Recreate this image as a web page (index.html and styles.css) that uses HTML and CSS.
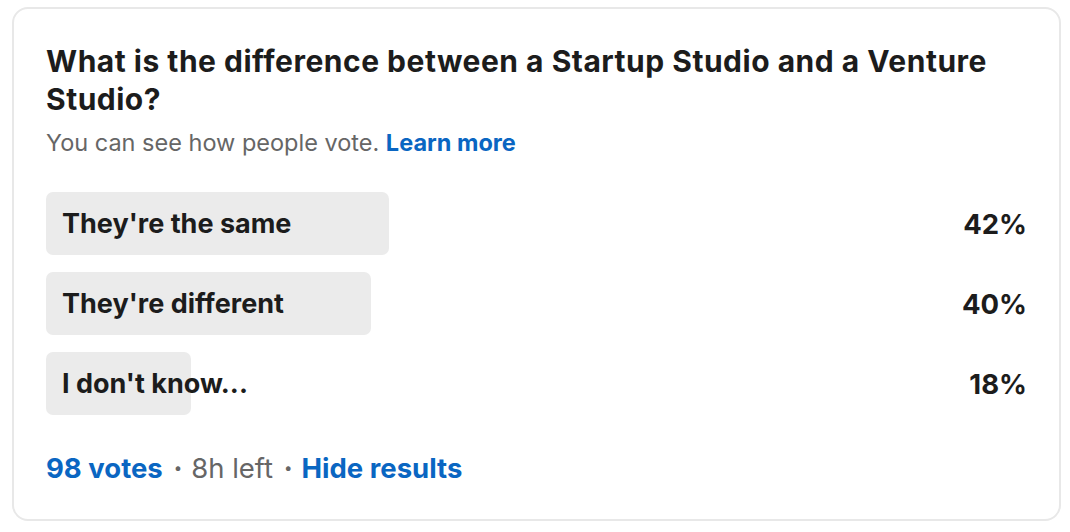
FILE: index.html
```html
<!DOCTYPE html>
<html>
<head>
<meta charset="utf-8">
<link rel="stylesheet" href="styles.css">
</head>
<body>
<div class="card">
  <h1 class="title">What is the difference between a Startup Studio and a Venture Studio?</h1>
  <p class="sub">You can see how people vote. <a class="link" href="#">Learn more</a></p>
  <div class="options">
    <div class="option">
      <div class="bar-wrap"><div class="bar" style="width:343px"></div><span class="label">They're the same</span></div>
      <span class="pct">42%</span>
    </div>
    <div class="option">
      <div class="bar-wrap"><div class="bar" style="width:325px"></div><span class="label">They're different</span></div>
      <span class="pct">40%</span>
    </div>
    <div class="option">
      <div class="bar-wrap"><div class="bar" style="width:145px"></div><span class="label">I don't know...</span></div>
      <span class="pct">18%</span>
    </div>
  </div>
  <div class="footer">
    <a class="link" href="#">98 votes</a><span class="dot">•</span><span class="meta">8h left</span><span class="dot">•</span><a class="link" href="#">Hide results</a>
  </div>
</div>
</body>
</html>
```
FILE: styles.css
```css
* { box-sizing: border-box; }
html, body { margin: 0; padding: 0; background: #fff; }
body {
  font-family: Inter, "Liberation Sans", sans-serif;
  color: #1f1f1f;
  padding: 7px 10px 0 12px;
}
.card {
  width: 1049px;
  height: 514px;
  border: 2px solid #e8e8e8;
  border-radius: 16px;
  padding: 33px 32px 0 32px;
}
.title {
  margin: 0;
  font-size: 30px;
  line-height: 38px;
  font-weight: 700;
  color: #1c1c1c;
  letter-spacing: 0.5px;
}
.sub {
  margin: 10px 0 0 0;
  font-size: 23.5px;
  line-height: 30px;
  color: #666;
}
.link {
  color: #0a66c2;
  font-weight: 700;
  text-decoration: none;
}
.options {
  margin-top: 34px;
  display: flex;
  flex-direction: column;
  gap: 17px;
}
.option {
  display: flex;
  align-items: center;
  justify-content: space-between;
  height: 63px;
}
.bar-wrap {
  position: relative;
  height: 63px;
  flex: 1;
  display: flex;
  align-items: center;
}
.bar {
  position: absolute;
  left: 0;
  top: 0;
  height: 63px;
  background: #ebebeb;
  border-radius: 7px;
}
.label {
  position: relative;
  padding-left: 16px;
  font-size: 27px;
  font-weight: 700;
  color: #1c1c1c;
}
.pct {
  font-size: 27.5px;
  font-weight: 700;
  color: #1c1c1c;
}
.footer {
  margin-top: 36px;
  font-size: 27.5px;
  line-height: 34px;
  display: flex;
  align-items: center;
}
.dot {
  color: #666;
  font-size: 15px;
  margin: 0 9px 0 11px;
}
.meta { color: #666; }
```
